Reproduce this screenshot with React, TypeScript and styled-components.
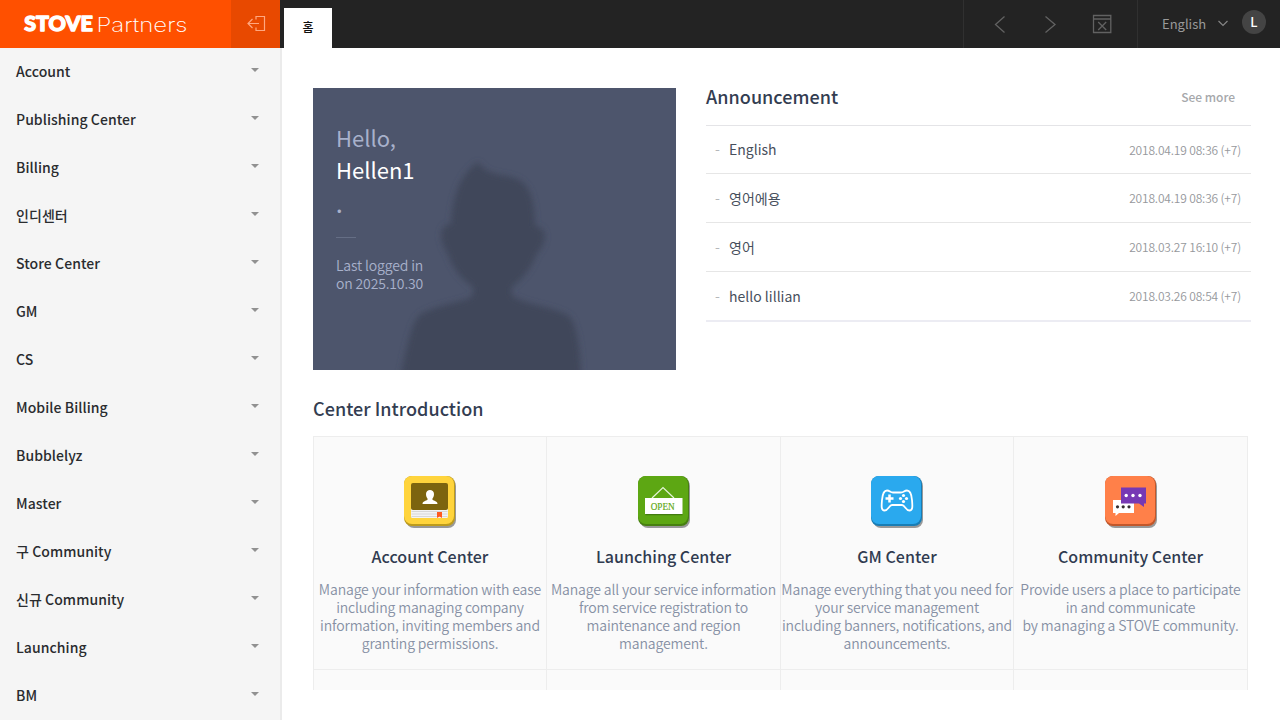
import React from "react";
import styled, { createGlobalStyle } from "styled-components";

const Global = createGlobalStyle`
  *, *::before, *::after { box-sizing: border-box; }
  body { margin: 0; background: #fff; }
  h1, h2, h3, p, ul { margin: 0; padding: 0; font-weight: inherit; }
  ul { list-style: none; }
  button { border: 0; padding: 0; background: none; font: inherit; color: inherit; }
`;

const Page = styled.div`
  width: 1280px;
  height: 720px;
  overflow: hidden;
  display: flex;
  flex-direction: column;
  background: #fff;
  color: #36404f;
  font-family: "Noto Sans CJK KR", "Noto Sans", sans-serif;
`;

const TopBar = styled.header`
  display: flex;
  flex: 0 0 48px;
  background: #232323;
`;

const Brand = styled.div`
  display: flex;
  align-items: center;
  width: 231px;
  background: #ff5000;
`;

const CollapseButton = styled.button`
  display: flex;
  width: 49px;
  background: #e84900;
`;

const Tab = styled.div`
  width: 48px;
  height: 40px;
  margin: 8px auto 0 4px;
  background: #fff;
  color: #111;
  font-size: 12px;
  font-weight: 500;
  line-height: 38px;
  text-align: center;
`;

const NavTools = styled.div`
  display: flex;
  width: 174px;
  border-left: 1px solid #303030;
`;

const UserTools = styled.div`
  display: flex;
  width: 143px;
  padding-left: 24px;
  border-left: 1px solid #303030;
`;

const Language = styled.span`
  width: 54px;
  color: #9a9a9a;
  font-size: 13px;
  line-height: 48px;
  white-space: nowrap;
`;

const Avatar = styled.span`
  width: 24px;
  height: 24px;
  margin-top: 10px;
  border-radius: 50%;
  background: #444;
  color: #fff;
  font-size: 13px;
  font-weight: 500;
  line-height: 24px;
  text-align: center;
`;

const Body = styled.div`
  display: flex;
  flex: 1;
  min-height: 0;
`;

const Sidebar = styled.nav`
  flex: 0 0 282px;
  overflow: hidden;
  background: #f5f5f5;
  border-right: 2px solid #ebebeb;
`;

const MenuItem = styled.a`
  display: flex;
  justify-content: space-between;
  height: 48px;
  padding: 0 21px 0 16px;
  color: #2a2c2f;
  font-size: 14px;
  font-weight: 500;
  line-height: 46px;
  letter-spacing: 0.06px;
  white-space: nowrap;
`;

const Caret = styled.i`
  width: 0;
  height: 0;
  margin-top: 20px;
  border: 4px solid transparent;
  border-top-color: #919191;
  border-bottom: 0;
`;

const Main = styled.main`
  flex: 1;
  height: 642px;
  padding: 40px 29px 0 31px;
  overflow: hidden;
`;

const Overview = styled.div`
  display: flex;
  justify-content: space-between;
`;

const Profile = styled.section`
  display: grid;
  width: 362.5px;
  height: 282px;
  background: #4d556c;
  & > * { grid-area: 1 / 1; }
`;

const ProfileText = styled.div`
  padding: 33px 0 0 23px;
  color: #a8b1cb;
  font-size: 22px;
  line-height: 32px;
  z-index: 1;
`;

const Name = styled.p`
  color: #fff;
`;

const Dot = styled.p`
  height: 52px;
  font-weight: 500;
  line-height: 36px;
`;

const Rule = styled.hr`
  width: 20px;
  height: 1px;
  margin: 0 0 18px;
  border: 0;
  background: #656e85;
`;

const LastLogin = styled.p`
  font-size: 14px;
  font-weight: 350;
  line-height: 18px;
  letter-spacing: -0.15px;
`;

const Announcements = styled.section`
  width: 545px;
`;

const AnnouncementHead = styled.div`
  display: flex;
  justify-content: space-between;
  height: 38px;
  padding-right: 16px;
  border-bottom: 1px solid #e4e4e7;
`;

const Title = styled.h2`
  color: #333d51;
  font-size: 18px;
  font-weight: 500;
  line-height: 16px;
  letter-spacing: 0.04px;
  white-space: nowrap;
`;

const More = styled.a`
  color: #a6a8ab;
  font-size: 12px;
  font-weight: 500;
  line-height: 18px;
`;

const NoticeRow = styled.li<{ $tall?: boolean; $last?: boolean }>`
  display: flex;
  align-items: center;
  height: ${(p) => (p.$last ? 50 : p.$tall ? 49 : 48)}px;
  padding: 0 10px 1px 9px;
  border-bottom: ${(p) => (p.$last ? "2px solid #ececf3" : "1px solid #e6e6e6")};
  font-size: 14px;
`;

const Dash = styled.span`
  width: 14px;
  margin-bottom: 2px;
  color: #b5b7ba;
`;

const NoticeTitle = styled.span`
  flex: 1;
  color: #474f5c;
`;

const Time = styled.time`
  color: #96989c;
  font-size: 12px;
  font-weight: 350;
  letter-spacing: -0.16px;
`;

const Centers = styled.section`
  margin-top: 30px;
`;

const CenterGrid = styled.div`
  display: grid;
  grid-template-columns: 233px 234px 233px 234px;
  grid-auto-rows: 233px;
  width: 935px;
  margin-top: 20px;
  border-top: 1px solid #ededed;
  border-left: 1px solid #ededed;
`;

const Card = styled.article`
  display: flex;
  flex-direction: column;
  align-items: center;
  padding-top: 35px;
  background: #fafafa;
  border-right: 1px solid #ededed;
  border-bottom: 1px solid #ededed;
`;

const CardTitle = styled.h3`
  margin-top: 12px;
  color: #303b50;
  font-size: 16px;
  font-weight: 500;
  line-height: 24px;
  letter-spacing: 0.03px;
  white-space: nowrap;
`;

const CardText = styled.p`
  margin-top: 12px;
  color: #8690a4;
  font-size: 14px;
  font-weight: 350;
  line-height: 18px;
  letter-spacing: -0.14px;
  text-align: center;
  white-space: pre;
`;

const menu = ["Account", "Publishing Center", "Billing", "인디센터", "Store Center", "GM", "CS",
  "Mobile Billing", "Bubblelyz", "Master", "구 Community", "신규 Community", "Launching", "BM"];

const notices = [
  { title: "English", time: "2018.04.19 08:36 (+7)" },
  { title: "영어에용", time: "2018.04.19 08:36 (+7)" },
  { title: "영어", time: "2018.03.27 16:10 (+7)" },
  { title: "hello lillian", time: "2018.03.26 08:54 (+7)" },
];

const Logo = () => (
  <svg width="231" height="48" viewBox="0 0 231 48" fill="#fff">
    <text x="24.300" y="31.300" fontFamily="Lato, sans-serif" fontWeight="900" fontSize="20" stroke="#fff" strokeWidth="1.300" strokeLinejoin="round" textLength="68.500" lengthAdjust="spacingAndGlyphs">STOVE</text>
    <text x="96.500" y="32" fontFamily="Inter, sans-serif" fontWeight="200" fontSize="20" textLength="91" lengthAdjust="spacingAndGlyphs">Partners</text>
  </svg>
);

const CollapseIcon = () => (
  <svg width="49" height="48" fill="none" stroke="#ffa77f" strokeWidth="1.2">
    <path d="M25 19.500V16.500H33.500V30.500H25V27.500M28 23.500H17M21.500 19L17 23.500L21.500 28" />
  </svg>
);

const NavIcons = () => (
  <svg width="173" height="48" fill="none" stroke="#626262" strokeWidth="1.3">
    <path d="M40.5 16.5L31.5 24.5L40.5 32.5M81.500 16.5L91 24.500L81.500 32.500" />
    <path d="M129.500 15.500H146.800V32.500H129.500ZM129.500 19H146.800M134.200 22L142.200 30M142.200 22L134.200 30" />
  </svg>
);

const Silhouette = () => (
  <svg width="362" height="282" viewBox="0 0 362 282">
    <defs><filter id="soft" x="-10%" y="-10%" width="120%" height="120%"><feGaussianBlur stdDeviation="3" /></filter></defs>
    <path filter="url(#soft)" fill="#40475a" d="M165 74C152 83 140 99 138 136C126 137 125 151 135 166C139 180 149 192 160 199C161 207 159 209 154 211C137 216 120 219 108 226C98 232 92 268 87 290H268C268 265 264 237 257 229C246 220 216 217 203 210C198 208 198 205 199 199C210 191 220 178 223 167C234 155 236 140 222 138C222 100 211 91 194 88C182 86 173 85 165 74Z" />
  </svg>
);

type TileProps = { face: string; edge: string; children?: React.ReactNode };
const Tile = ({ face, edge, children }: TileProps) => (
  <svg width="60" height="60" viewBox="0 0 60 60">
    <rect x="6" y="6" width="50" height="50" rx="8" fill="#999" />
    <rect x="4" y="4" width="51" height="50" rx="8" fill={edge} />
    <rect x="4" y="4" width="50" height="48" rx="8" fill={face} />
    {children}
  </svg>
);

const AccountIcon = () => (
  <Tile face="#ffd43c" edge="#bd9b1c">
    <rect x="11" y="36" width="37" height="10" rx="1.500" fill="#f3f3f3" />
    <path d="M11.500 39.500H47.500M11.500 42H47.500M11.500 44.500H47.500" stroke="#cfcfcf" strokeWidth=".8" />
    <rect x="11" y="11" width="37" height="27" rx="2" fill="#7c640f" />
    <path d="M26 22C26 16.500 34 16.500 34 22C34 24.500 33 25.500 32.300 27C32.500 29 37.500 28.500 37.500 32H22.500C22.500 28.500 27.500 29 27.700 27C27 25.500 26 24.500 26 22Z" fill="#fff" />
    <path d="M37 40H42V46L39.500 44.500L37 46Z" fill="#ff5a1f" />
  </Tile>
);

const LaunchIcon = () => (
  <Tile face="#5da713" edge="#478011">
    <path d="M18 26L29 15.500L40 26" fill="none" stroke="#e6f4d9" strokeWidth="1.200" />
    <path d="M11.500 42.500H48.500" stroke="#437c10" strokeWidth="1.500" />
    <rect x="11" y="26" width="37.500" height="16" fill="#fff" />
    <text x="16.700" y="38" fontFamily="Liberation Serif, serif" fontSize="9.500" fill="#5da713" stroke="#5da713" strokeWidth=".15" textLength="24" lengthAdjust="spacingAndGlyphs">OPEN</text>
  </Tile>
);

const GmIcon = () => (
  <Tile face="#2aa9ee" edge="#187db5">
    <path d="M20 18.500C23 18.500 23 20.500 26 20.500H34C37 20.500 37 18.500 40 18.500C43 18.500 44.500 22 45 28C45.500 34 46 38.500 42.500 38.500C38.500 38.500 38 33 35 33H25C22 33 21.500 38.500 17.500 38.500C14 38.500 14.500 34 15 28C15.500 22 17 18.500 20 18.500Z" fill="none" stroke="#fff" strokeWidth="1.800" />
    <path d="M22.500 22.500V30.500M18.500 26.500H26.500" stroke="#fff" strokeWidth="2.500" />
    <g fill="#fff"><circle cx="36.500" cy="23.500" r="1.600" /><circle cx="36.500" cy="29.500" r="1.600" /><circle cx="33.500" cy="26.500" r="1.600" /><circle cx="39.500" cy="26.500" r="1.600" /></g>
  </Tile>
);

const CommunityIcon = () => (
  <Tile face="#ff8049" edge="#c2572a">
    <path d="M12 28H33V41H18L14.500 44V41H12Z" fill="#fff" />
    <path d="M20 15.500H45V31.500H43V35L38 31.500H20Z" fill="#7638b4" />
    <g fill="#fff"><circle cx="25.200" cy="23.500" r="1.700" /><circle cx="32" cy="23.500" r="1.700" /><circle cx="39" cy="23.500" r="1.700" /></g>
    <g fill="#332d30"><circle cx="16.500" cy="34.800" r="1.600" /><circle cx="22.200" cy="34.800" r="1.600" /><circle cx="28" cy="34.800" r="1.600" /></g>
  </Tile>
);

const centers = [
  { title: "Account Center", icon: <AccountIcon />, text: "Manage your information with ease\nincluding managing company\ninformation, inviting members and\ngranting permissions." },
  { title: "Launching Center", icon: <LaunchIcon />, text: "Manage all your service information\nfrom service registration to\nmaintenance and region\nmanagement." },
  { title: "GM Center", icon: <GmIcon />, text: "Manage everything that you need for\nyour service management\nincluding banners, notifications, and\nannouncements." },
  { title: "Community Center", icon: <CommunityIcon />, text: "Provide users a place to participate\nin and communicate\nby managing a STOVE community." },
];

export default function App() {
  return (
    <Page>
      <Global />
      <TopBar>
        <Brand><Logo /></Brand>
        <CollapseButton><CollapseIcon /></CollapseButton>
        <Tab>홈</Tab>
        <NavTools><NavIcons /></NavTools>
        <UserTools>
          <Language>English</Language>
          <svg width="26" height="48" fill="none" stroke="#858585" strokeWidth="1.200"><path d="M2.500 21L7 25.500L11.500 21" /></svg>
          <Avatar>L</Avatar>
        </UserTools>
      </TopBar>
      <Body>
        <Sidebar>
          {menu.map((m) => <MenuItem key={m}>{m}<Caret /></MenuItem>)}
        </Sidebar>
        <Main>
          <Overview>
            <Profile>
              <Silhouette />
              <ProfileText>
                <p>Hello,</p>
                <Name>Hellen1</Name>
                <Dot>.</Dot>
                <Rule />
                <LastLogin>Last logged in<br />on 2025.10.30</LastLogin>
              </ProfileText>
            </Profile>
            <Announcements>
              <AnnouncementHead><Title>Announcement</Title><More>See more</More></AnnouncementHead>
              <ul>
                {notices.map((n, i) => (
                  <NoticeRow key={n.title} $tall={i > 0} $last={i === 3}>
                    <Dash>-</Dash><NoticeTitle>{n.title}</NoticeTitle><Time>{n.time}</Time>
                  </NoticeRow>
                ))}
              </ul>
            </Announcements>
          </Overview>
          <Centers>
            <Title>Center Introduction</Title>
            <CenterGrid>
              {centers.map((c) => (
                <Card key={c.title}>{c.icon}<CardTitle>{c.title}</CardTitle><CardText>{c.text}</CardText></Card>
              ))}
              <Card /><Card /><Card /><Card />
            </CenterGrid>
          </Centers>
        </Main>
      </Body>
    </Page>
  );
}
